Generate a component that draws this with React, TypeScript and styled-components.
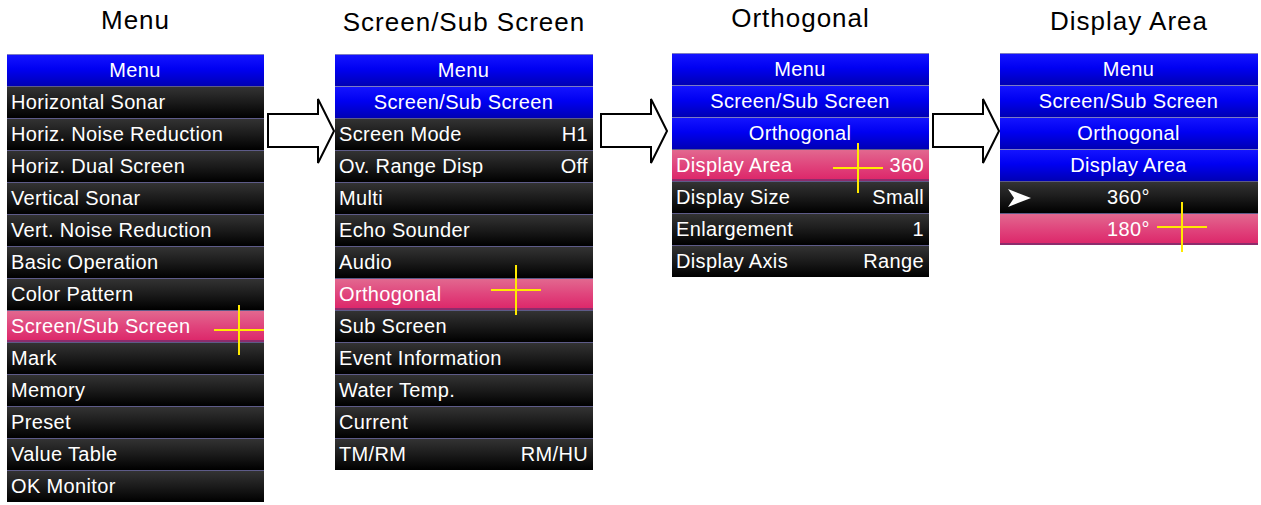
import {Fragment} from 'react';
import styled, {createGlobalStyle, css} from 'styled-components';

const GlobalStyle = createGlobalStyle`
  html, body {
    margin: 0;
    padding: 0;
    background: #fff;
  }
  body {
    width: 1261px;
    height: 505px;
    overflow: hidden;
    font-family: 'Liberation Sans', Arial, sans-serif;
  }
`;

type Variant = 'head' | 'item' | 'active';

type Item = {
  label: string;
  value?: string;
  variant?: Variant;
  cross?: [number, number];
  pointer?: boolean;
  centered?: boolean;
};

type Screen = {
  title: string;
  width: number;
  top: number;
  gap: number;
  items: Item[];
};

const Page = styled.div`
  display: flex;
  align-items: flex-start;
  padding-left: 7px;
`;

const Column = styled.section<{$width: number}>`
  display: flex;
  flex-direction: column;
  width: ${p => p.$width}px;
  flex: none;
`;

const Title = styled.h2<{$top: number; $gap: number}>`
  margin: ${p => p.$top}px 0 ${p => p.$gap}px;
  font: 400 26px/30px 'Liberation Sans', Arial, sans-serif;
  letter-spacing: 1px;
  text-align: center;
  color: #000;
`;

const Panel = styled.div`
  display: flex;
  flex-direction: column;
  background: #000;
`;

const skins = {
  head: css`
    justify-content: center;
    background: linear-gradient(#1414ff 0%, #0000f2 45%, #0000b4 100%);
    border-top: 1px solid #7c7cc4;
  `,
  item: css`
    justify-content: space-between;
    background: linear-gradient(#333 0%, #1d1d1d 45%, #000 100%);
    border-top: 1px solid #5d5b88;
  `,
  active: css`
    justify-content: space-between;
    background: linear-gradient(#e2688f 0%, #e0447c 50%, #dc2468 100%);
    border-top: 1px solid #5d5b88;
    box-shadow: inset 0 -2px 0 #8c2c6c;
  `,
};

const Row = styled.div<{$variant: Variant}>`
  position: relative;
  box-sizing: border-box;
  height: 32px;
  display: flex;
  align-items: center;
  padding: 0 5px 0 4px;
  color: #fff;
  font-size: 20px;
  line-height: 31px;
  letter-spacing: 0.35px;
  white-space: nowrap;
  ${p => skins[p.$variant]}
`;

const ChoiceRow = styled(Row)`
  display: grid;
  grid-template-columns: 1fr auto 1fr;
  align-items: center;
`;

const PointerCell = styled.span`
  display: flex;
  align-items: center;
  padding-left: 4px;
`;

const Cross = styled.span<{$x: number; $y: number}>`
  position: absolute;
  left: ${p => p.$x - 25}px;
  top: ${p => p.$y - 25}px;
  width: 50px;
  height: 50px;
  z-index: 2;
  pointer-events: none;

  &::before,
  &::after {
    content: '';
    position: absolute;
    background: #ffea00;
  }
  &::before {
    left: 24px;
    top: 0;
    width: 2px;
    height: 50px;
  }
  &::after {
    top: 24px;
    left: 0;
    width: 50px;
    height: 2px;
  }
`;

const ArrowBox = styled.div<{$before: number; $after: number}>`
  flex: none;
  margin: 98px ${p => p.$after}px 0 ${p => p.$before}px;
  width: 68px;
  height: 66px;
`;

const Arrow = ({before, after}: {before: number; after: number}) => (
  <ArrowBox $before={before} $after={after}>
    <svg width="68" height="66" viewBox="0 0 68 66">
      <polygon
        points="1,16 51,16 51,1 67,33 51,65 51,49 1,49"
        fill="#fff"
        stroke="#000"
        strokeWidth="2"
        strokeLinejoin="miter"
      />
    </svg>
  </ArrowBox>
);

const Pointer = () => (
  <svg width="23" height="18" viewBox="0 0 23 18">
    <polygon points="0,0 23,9 0,18 6,9" fill="#fff" />
  </svg>
);

const head = (label: string): Item => ({label, variant: 'head'});

const screens: Screen[] = [
  {
    title: 'Menu',
    width: 257,
    top: 5,
    gap: 19,
    items: [
      head('Menu'),
      {label: 'Horizontal Sonar'},
      {label: 'Horiz. Noise Reduction'},
      {label: 'Horiz. Dual Screen'},
      {label: 'Vertical Sonar'},
      {label: 'Vert. Noise Reduction'},
      {label: 'Basic Operation'},
      {label: 'Color Pattern'},
      {label: 'Screen/Sub Screen', variant: 'active', cross: [232, 19]},
      {label: 'Mark'},
      {label: 'Memory'},
      {label: 'Preset'},
      {label: 'Value Table'},
      {label: 'OK Monitor'},
    ],
  },
  {
    title: 'Screen/Sub Screen',
    width: 258,
    top: 7,
    gap: 17,
    items: [
      head('Menu'),
      head('Screen/Sub Screen'),
      {label: 'Screen Mode', value: 'H1'},
      {label: 'Ov. Range Disp', value: 'Off'},
      {label: 'Multi'},
      {label: 'Echo Sounder'},
      {label: 'Audio'},
      {label: 'Orthogonal', variant: 'active', cross: [181, 11]},
      {label: 'Sub Screen'},
      {label: 'Event Information'},
      {label: 'Water Temp.'},
      {label: 'Current'},
      {label: 'TM/RM', value: 'RM/HU'},
    ],
  },
  {
    title: 'Orthogonal',
    width: 257,
    top: 3,
    gap: 20,
    items: [
      head('Menu'),
      head('Screen/Sub Screen'),
      head('Orthogonal'),
      {label: 'Display Area', value: '360', variant: 'active', cross: [186, 18]},
      {label: 'Display Size', value: 'Small'},
      {label: 'Enlargement', value: '1'},
      {label: 'Display Axis', value: 'Range'},
    ],
  },
  {
    title: 'Display Area',
    width: 258,
    top: 6,
    gap: 17,
    items: [
      head('Menu'),
      head('Screen/Sub Screen'),
      head('Orthogonal'),
      head('Display Area'),
      {label: '360°', centered: true, pointer: true},
      {label: '180°', centered: true, variant: 'active', cross: [182, 13]},
    ],
  },
];

const arrows = [
  {before: 3, after: 0},
  {before: 7, after: 4},
  {before: 3, after: 0},
];

const MenuRow = ({item}: {item: Item}) => {
  const variant = item.variant ?? 'item';
  const cross = item.cross && <Cross $x={item.cross[0]} $y={item.cross[1]} />;

  if (item.centered) {
    return (
      <ChoiceRow $variant={variant}>
        <PointerCell>{item.pointer && <Pointer />}</PointerCell>
        <span>{item.label}</span>
        <span />
        {cross}
      </ChoiceRow>
    );
  }

  return (
    <Row $variant={variant}>
      <span>{item.label}</span>
      {item.value && <span>{item.value}</span>}
      {cross}
    </Row>
  );
};

const App = () => (
  <>
    <GlobalStyle />
    <Page>
      {screens.map((screen, i) => (
        <Fragment key={screen.title}>
          <Column $width={screen.width}>
            <Title $top={screen.top} $gap={screen.gap}>
              {screen.title}
            </Title>
            <Panel>
              {screen.items.map((item, j) => (
                <MenuRow key={j} item={item} />
              ))}
            </Panel>
          </Column>
          {arrows[i] && <Arrow before={arrows[i].before} after={arrows[i].after} />}
        </Fragment>
      ))}
    </Page>
  </>
);

export default App;
